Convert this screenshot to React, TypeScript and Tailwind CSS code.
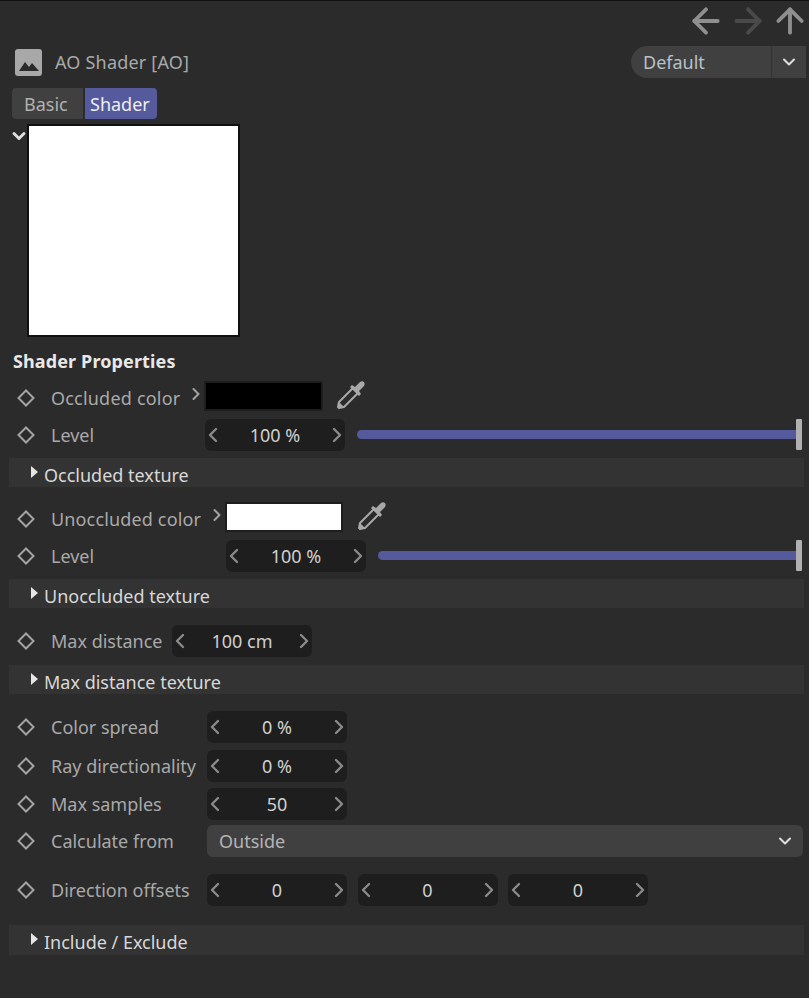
import { ArrowLeft, ArrowRight, ArrowUp, ChevronDown, ChevronLeft, ChevronRight } from "lucide-react";
import type { ReactNode } from "react";

const font = { fontFamily: '"Noto Sans", "Open Sans", sans-serif' };

function Diamond() {
  return (
    <svg className="h-[18px] w-[18px] shrink-0" viewBox="0 0 18 18" fill="none">
      <path d="M9 1.5 16.5 9 9 16.5 1.5 9Z" stroke="#a3a3a3" strokeWidth="2" />
    </svg>
  );
}

function Dropper({ className }: { className?: string }) {
  return (
    <svg className={className} viewBox="0 0 30 30" fill="none">
      <path d="M17 8 22 13 8 27 3 28 2 27 3 22Z" stroke="#a8a8a8" strokeWidth="2" strokeLinejoin="round" />
      <path d="M2 28 3 22 8 27Z" fill="#a8a8a8" />
      <path d="M14 7 23 16 25 14 23 11 28 6C30 3 27 0 24 2L19 7 16 5Z" fill="#a8a8a8" />
    </svg>
  );
}

function Row({ label, labelWidth, className, children }: { label: string; labelWidth: string; className?: string; children: ReactNode }) {
  return (
    <div className={`flex items-center pl-[17px] ${className ?? ""}`}>
      <Diamond />
      <span className={`ml-4 shrink-0 whitespace-nowrap text-[#a9a9a9] ${labelWidth}`}>{label}</span>
      {children}
    </div>
  );
}

function Stepper({ value, className }: { value: string; className?: string }) {
  return (
    <div className={`flex h-8 w-[140px] shrink-0 items-center justify-between rounded-md bg-[#1e1e1e] ${className ?? ""}`}>
      <ChevronLeft className="-mx-[4px] h-6 w-6 text-[#8a8a8a]" strokeWidth={2.4} />
      <span className="text-[#d0d0d0]">{value}</span>
      <ChevronRight className="-mx-[4px] h-6 w-6 text-[#8a8a8a]" strokeWidth={2.4} />
    </div>
  );
}

function Slider() {
  return (
    <div className="ml-3 -mt-0.5 flex h-[30px] flex-1 items-center pr-[7px]">
      <div className="h-[9px] flex-1 rounded-l-full bg-[#545a9c]" />
      <div className="h-[31px] w-[6px] rounded-[1px] bg-[#b0b0b0]" />
    </div>
  );
}

function Section({ label, className }: { label: string; className?: string }) {
  return (
    <div className={`ml-[9px] mr-[5px] flex h-[29px] items-center bg-[#333333] pl-[22px] ${className ?? ""}`}>
      <div className="mb-0.5 h-0 w-0 border-y-[6px] border-l-[7px] border-y-transparent border-l-[#e6e6e6]" />
      <span className="ml-1.5 mt-1 text-[#d8d8d8]">{label}</span>
    </div>
  );
}

export default function App() {
  return (
    <div className="h-[998px] w-[809px] overflow-hidden border-t border-t-[#111111] bg-[#2b2b2b] text-[18px] leading-none" style={font}>
      <div className="-mr-px flex h-[38px] items-center justify-end gap-[2px] pt-0.5">
        <ArrowLeft className="h-10 w-10 text-[#8f8f8f]" strokeWidth={2.3} />
        <ArrowRight className="h-10 w-10 text-[#4a4a4a]" strokeWidth={2.3} />
        <ArrowUp className="h-10 w-10 text-[#8f8f8f]" strokeWidth={2.3} />
      </div>

      <div className="mt-[7px] flex h-8 items-center pl-[15px] pr-[3px]">
        <div className="flex h-[27px] w-[27px] items-end justify-center rounded-[3px] bg-[#a8a8a8] pb-[5px]">
          <svg className="h-3 w-5" viewBox="0 0 20 12"><path d="M0 12 6 3 10 8 13 4 20 12Z" fill="#2b2b2b" /></svg>
        </div>
        <span className="ml-[13px] tracking-[0.2px] text-[#a9a9a9]">AO Shader [AO]</span>
        <div className="ml-auto flex h-8 w-[175px] items-center rounded-l-full rounded-r-lg bg-[#404040]">
          <span className="flex-1 pl-3 text-[#b8c0c8]">Default</span>
          <div className="flex h-8 w-[35px] items-center justify-center border-l border-l-[#333333]">
            <ChevronDown className="h-5 w-5 text-[#dddddd]" strokeWidth={2.5} />
          </div>
        </div>
      </div>

      <div className="ml-3 mt-[10px] flex h-[31px]">
        <div className="flex w-[71px] items-center rounded-l bg-[#404040] pl-3 text-[#b0b0b0]">Basic</div>
        <div className="ml-[2px] flex w-[72px] items-center rounded-r-sm bg-[#545a9c] pl-[5px] text-[#eeeeee]">Shader</div>
      </div>

      <div className="mt-[5px] flex pl-3">
        <ChevronDown className="-ml-[3px] -mr-[2px] mt-[2px] h-5 w-5 text-[#e0e0e0]" strokeWidth={3.5} />
        <div className="h-[213px] w-[213px] border-2 border-[#111111] bg-white" />
      </div>

      <div className="ml-[13px] mt-[15px] h-5 font-bold tracking-[0.12px] text-[#e8e8e8]">Shader Properties</div>

      <Row label="Occluded color" labelWidth="w-[137px] tracking-[0.2px]" className="mt-[10px] h-8">
        <ChevronRight className="-mx-[2px] -mt-2 h-5 w-5 text-[#a0a0a0]" strokeWidth={2.5} />
        <div className="-mt-1 h-[30px] w-[119px] border-2 border-[#1e1e1e] bg-black" />
        <Dropper className="-mt-1.5 ml-[13px] h-[30px] w-[30px]" />
      </Row>
      <Row label="Level" labelWidth="w-[154px]" className="mt-[5px] h-8">
        <Stepper value="100 %" />
        <Slider />
      </Row>
      <Section label="Occluded texture" className="mt-[7px]" />

      <Row label="Unoccluded color" labelWidth="w-[158px] tracking-[0.15px]" className="mt-[16px] h-8">
        <ChevronRight className="-mx-[2px] -mt-2 h-5 w-5 text-[#a0a0a0]" strokeWidth={2.5} />
        <div className="-mt-[5px] h-[30px] w-[118px] border-2 border-[#1e1e1e] bg-white" />
        <Dropper className="-mt-1.5 ml-[14px] h-[30px] w-[30px]" />
      </Row>
      <Row label="Level" labelWidth="w-[175px]" className="mt-[5px] h-8">
        <Stepper value="100 %" />
        <Slider />
      </Row>
      <Section label="Unoccluded texture" className="mt-[7px]" />

      <Row label="Max distance" labelWidth="w-[121px]" className="mt-[17px] h-8">
        <Stepper value="100 cm" />
      </Row>
      <Section label="Max distance texture" className="mt-[8px]" />

      <Row label="Color spread" labelWidth="w-[156px]" className="mt-[17px] h-8">
        <Stepper value="0 %" />
      </Row>
      <Row label="Ray directionality" labelWidth="w-[156px]" className="mt-[7px] h-8">
        <Stepper value="0 %" />
      </Row>
      <Row label="Max samples" labelWidth="w-[156px]" className="mt-[6px] h-8">
        <Stepper value="50" />
      </Row>
      <Row label="Calculate from" labelWidth="w-[156px]" className="mt-[5px] h-8">
        <div className="mr-[6px] flex h-8 flex-1 items-center justify-between rounded-md bg-[#404040] pl-3 pr-2">
          <span className="text-[#b4b4b4]">Outside</span>
          <ChevronDown className="h-5 w-5 text-[#dddddd]" strokeWidth={2.5} />
        </div>
      </Row>
      <Row label="Direction offsets" labelWidth="w-[156px]" className="mt-[17px] h-8">
        <div className="flex gap-[10.5px]">
          <Stepper value="0" />
          <Stepper value="0" />
          <Stepper value="0" />
        </div>
      </Row>
      <Section label="Include / Exclude" className="mt-[19px] h-[30px]" />
    </div>
  );
}
